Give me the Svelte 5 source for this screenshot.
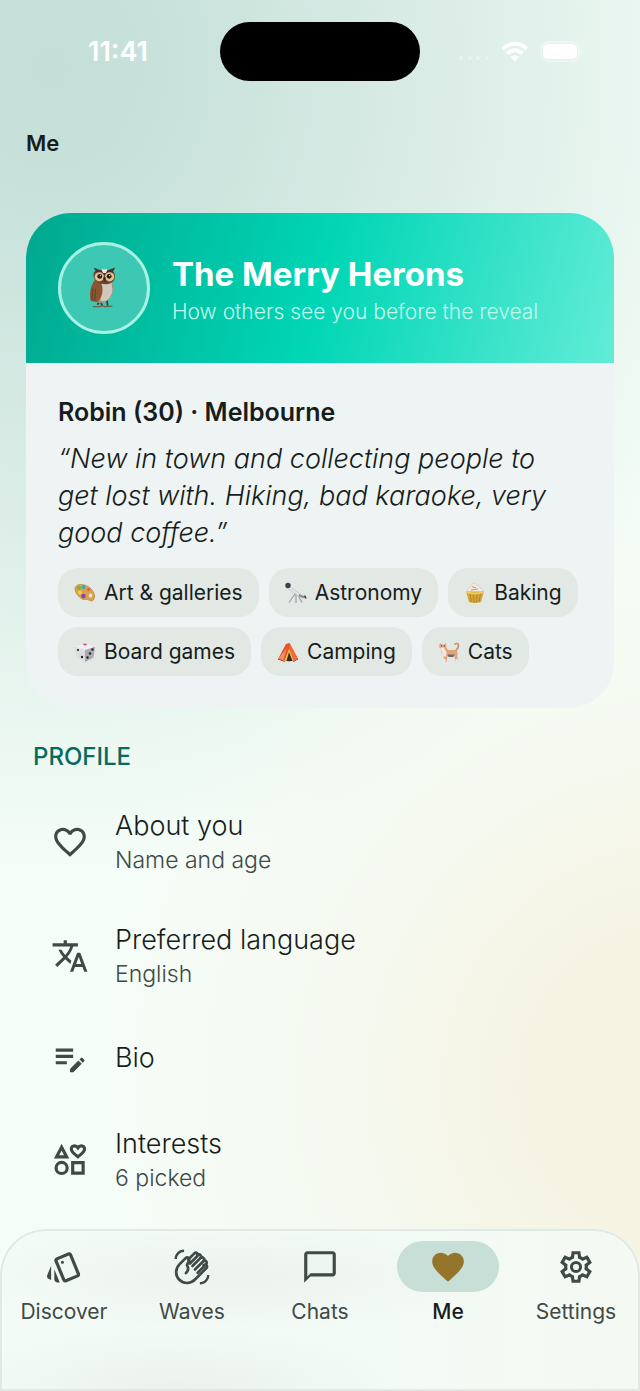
<script>
  const interests = [
    { icon: 'palette', label: 'Art & galleries' },
    { icon: 'telescope', label: 'Astronomy' },
    { icon: 'cupcake', label: 'Baking' },
    { icon: 'die', label: 'Board games' },
    { icon: 'tent', label: 'Camping' },
    { icon: 'cat', label: 'Cats' }
  ];

  const rows = [
    { icon: 'heart', title: 'About you', detail: 'Name and age' },
    { icon: 'translate', title: 'Preferred language', detail: 'English' },
    { icon: 'note', title: 'Bio', detail: '' },
    { icon: 'shapes', title: 'Interests', detail: '6 picked' }
  ];

  const tabs = [
    { icon: 'cards', label: 'Discover' },
    { icon: 'wave', label: 'Waves' },
    { icon: 'chat', label: 'Chats' },
    { icon: 'heartFill', label: 'Me', active: true },
    { icon: 'gear', label: 'Settings' }
  ];

  const paths = {
    heart:
      'M16.5 3c-1.74 0-3.41.81-4.5 2.09C10.91 3.81 9.24 3 7.5 3 4.42 3 2 5.42 2 8.5c0 3.78 3.4 6.86 8.55 11.54L12 21.35l1.45-1.32C18.6 15.36 22 12.28 22 8.5 22 5.42 19.58 3 16.5 3zm-4.4 15.55l-.1.1-.1-.1C7.14 14.24 4 11.39 4 8.5 4 6.5 5.5 5 7.5 5c1.54 0 3.04.99 3.57 2.36h1.87C13.46 5.99 14.96 5 16.5 5c2 0 3.5 1.5 3.5 3.5 0 2.89-3.14 5.74-7.9 10.05z',
    heartFill:
      'M12 21.35l-1.45-1.32C5.4 15.36 2 12.28 2 8.5 2 5.42 4.42 3 7.5 3c1.74 0 3.41.81 4.5 2.09C13.09 3.81 14.76 3 16.5 3 19.58 3 22 5.42 22 8.5c0 3.78-3.4 6.86-8.55 11.54L12 21.35z',
    translate:
      'M12.87 15.07l-2.54-2.51.03-.03c1.74-1.94 2.98-4.17 3.71-6.53H17V4h-7V2H8v2H1v1.99h11.17C11.5 7.92 10.44 9.75 9 11.35 8.07 10.32 7.3 9.19 6.69 8h-2c.73 1.63 1.73 3.17 2.98 4.56l-5.09 5.02L4 19l5-5 3.11 3.11.76-2.04zM18.5 10h-2L12 22h2l1.12-3h4.75L21 22h2l-4.5-12zm-2.62 7l1.62-4.33L19.12 17h-3.24z',
    note: 'M3 10h11v2H3v-2zm0-2h11V6H3v2zm0 8h7v-2H3v2zm15.01-3.13.71-.71c.39-.39 1.02-.39 1.41 0l.71.71c.39.39.39 1.02 0 1.41l-.71.71-2.12-2.12zm-.71.71-5.3 5.3V21h2.12l5.3-5.3-2.12-2.12z',
    cards:
      'M2.53 19.65l1.34.56v-9.03l-2.43 5.86c-.41 1.02.08 2.19 1.09 2.61zm19.5-3.7L17.07 3.98c-.31-.75-1.04-1.21-1.81-1.23-.26 0-.53.04-.79.15L7.1 5.95c-.75.31-1.21 1.03-1.23 1.8-.01.27.04.54.15.8l4.96 11.97c.31.76 1.05 1.22 1.83 1.23.26 0 .52-.05.77-.15l7.36-3.05c1.02-.42 1.51-1.59 1.09-2.6zm-9.2 3.8L7.87 7.79l7.35-3.04h.01l4.95 11.95-7.35 3.05zM11 8a1 1 0 1 0 0 2 1 1 0 0 0 0-2zM5.88 19.75c0 1.1.9 2 2 2h1.45l-3.45-8.34v6.34z',
    chat: 'M20 2H4c-1.1 0-2 .9-2 2v18l4-4h14c1.1 0 2-.9 2-2V4c0-1.1-.9-2-2-2zm0 14H6l-2 2V4h16v12z'
  };
</script>

{#snippet glyph(name)}
  {#if name === 'shapes'}
    <svg class="glyph" viewBox="0 0 24 24" aria-hidden="true">
      <g fill="none" stroke="currentColor" stroke-width="2">
        <path d="M6.700 3.900L3.500 10h6.400z" />
        <path d="M17 10c-2.600-1.900-4.200-3.200-4.200-4.900 0-2.300 2.900-2.700 4.200-.8 1.300-1.900 4.200-1.500 4.200.8 0 1.700-1.600 3-4.200 4.900z" />
        <circle cx="6.700" cy="17" r="3.500" />
        <path d="M13.700 13.700h6.600v6.600h-6.600z" />
      </g>
    </svg>
  {:else if name === 'gear'}
    <svg class="glyph" viewBox="0 -960 960 960" aria-hidden="true">
      <path
        fill="currentColor"
        d="m370-80-16-128q-13-5-24.500-12T307-235l-119 50L78-375l103-78q-1-7-1-13.500v-27q0-6.500 1-13.500L78-585l110-190 119 50q11-8 23-15t24-12l16-128h220l16 128q13 5 24.500 12t22.500 15l119-50 110 190-103 78q1 7 1 13.500v27q0 6.500-2 13.500l103 78-110 190-118-50q-11 8-23 15t-24 12L590-80H370Zm70-80h79l14-106q31-8 57.500-23.500T639-327l99 41 39-68-86-65q5-14 7-29.500t2-31.500q0-16-2-31.500t-7-29.500l86-65-39-68-99 42q-22-23-48.500-38.500T533-694l-13-106h-79l-14 106q-31 8-57.500 23.500T321-633l-99-41-39 68 86 64q-5 15-7 30t-2 32q0 16 2 31t7 30l-86 65 39 68 99-42q22 23 48.500 38.500T427-266l13 106Z"
      />
      <circle cx="480" cy="-480" r="116" fill="none" stroke="currentColor" stroke-width="76" />
    </svg>
  {:else if name === 'wave'}
    <svg class="glyph" viewBox="0 0 24 24" aria-hidden="true">
      <g fill="none" stroke="currentColor" stroke-width="1.700" stroke-linecap="round" stroke-linejoin="round">
        <path d="M8.200 15.800c1.600-1.500 1.600-3.400.6-5L10 8.300c.8-1.300-.6-3-2-1.900L4.200 10.200c-2.900 2.900-2.900 7.200-.2 9.900s7 2.700 9.900-.2l7.100-7.100c1.200-1.300-.3-3-1.700-1.900" />
        <path d="M9.600 7.300l3.900-3.900c1.300-1.100 2.900.5 1.800 1.800l-4.600 4.600" />
        <path d="M15.300 4.600c1.400-1.300 3.200.4 2 1.800l-5 5" />
        <path d="M17.500 6.300c1.400-.9 2.900.6 1.800 1.900l-5.400 5.400" />
        <path d="M19.400 8.200c1.400-.6 2.500.9 1.400 2.200l-5.200 5.200" />
      </g>
      <path d="M1 7c0-3.310 2.690-6 6-6v1.500C4.520 2.500 2.500 4.520 2.500 7zM23 17c0 3.310-2.690 6-6 6v-1.500c2.480 0 4.500-2.020 4.500-4.500z" fill="currentColor" />
    </svg>
  {:else}
    <svg class="glyph" viewBox="0 0 24 24" aria-hidden="true"><path fill="currentColor" d={paths[name]} /></svg>
  {/if}
{/snippet}

{#snippet emoji(name)}
  <svg class="emoji" viewBox="0 0 22 22" aria-hidden="true">
    {#if name === 'palette'}
      <path d="M1 7C1 2 8 1 14 4.500s8 10 5.500 13.500c-2 2.500-4.500-.5-7-.5-3 0-4 .5-6.500-2C3 13 1 10 1 7z" fill="#dba24b" stroke="#b57b2e" stroke-width=".6" />
      <circle cx="5" cy="6" r="2.100" fill="#77b837" />
      <circle cx="9.500" cy="5" r="1.900" fill="#35a6c4" />
      <circle cx="6" cy="10.500" r="2" fill="#f2d13a" />
      <circle cx="9.500" cy="14" r="2.200" fill="#8a3fb3" />
      <circle cx="14.500" cy="7.500" r="1.500" fill="#e2603d" />
      <ellipse cx="16.500" cy="13.500" rx="1.700" ry="2" fill="#e8efec" />
    {:else if name === 'telescope'}
      <path d="M10.500 11.500L4 20.500M11 11.500v9.500M12 11.500l5 9" stroke="#9ba2a3" stroke-width="1.200" fill="none" />
      <path d="M3.500 3.500l12 9-1.300 2.200L1.800 6z" fill="#e1e6e6" stroke="#a9b0b2" stroke-width=".5" />
      <circle cx="3" cy="3.500" r="2.700" fill="#35434f" />
      <path d="M14 12l6 2.500-.6 2-5.400-2z" fill="#878e92" />
      <path d="M19.500 13.500l1.500 3" stroke="#3b454c" stroke-width="1.500" />
    {:else if name === 'cupcake'}
      <path d="M4 10C2 7 6 6 6.500 4.500 8 1 12 0 12.500 3c3-.5 3 2 3.500 3 3 .5 3.500 3 2 4.500z" fill="#f1e8df" stroke="#d4c2b2" stroke-width=".6" />
      <path d="M8 4.500l4 1.500M7 8l7-1" stroke="#c58a6d" stroke-width=".9" />
      <path d="M2 9.500h18l-3 10.500q-6 2-12 0z" fill="#d6a538" />
      <path d="M2 10q9 3 18 0" stroke="#edcc6a" stroke-width="1.800" fill="none" />
      <path d="M6 12l1.300 8M9.500 12.500l.5 8M13 12.500l-.5 8M16.500 12l-1.500 8" stroke="#ab7b20" stroke-width=".8" />
    {:else if name === 'die'}
      <path d="M1 5.500L11 2l10 3.500-1.500 11L11 21l-8.500-5z" fill="#dcdde0" />
      <path d="M11 9l10-3.500-1.500 11L11 21z" fill="#a9abb0" />
      <path d="M1 5.500L11 2l10 3.500L11 9z" fill="#f0f0f2" />
      <ellipse cx="11" cy="3.500" rx="2" ry="1" fill="#e65065" />
      <g fill="#25272b">
        <circle cx="4" cy="9" r="1.100" /><circle cx="8" cy="16" r="1.200" />
        <circle cx="13.500" cy="16.500" r="1.200" /><circle cx="16" cy="12.500" r="1.200" /><circle cx="18.500" cy="8.500" r="1.200" />
      </g>
    {:else if name === 'tent'}
      <path d="M9 3l3.500-1L21 18l-9 2.500L1 18z" fill="#e5532d" />
      <path d="M12.500 2L21 18l-9 2.500z" fill="#f26a37" />
      <path d="M10 7L1 18l5 1.500z" fill="#f58d66" />
      <path d="M12 8l-4.500 11.500 9 0z" fill="#f1c54a" />
      <path d="M12 11l-2.500 9h6z" fill="#372a23" />
      <path d="M1 18l7 2.500M21 18l-5 2.500" stroke="#aa3d20" />
    {:else}
      <path d="M17.500 10c1-2 3-2 3-5.500 0-2-2-2.500-3.500-1.500" fill="none" stroke="#cf8e63" stroke-width="1.700" stroke-linecap="round" />
      <path d="M2 2l2 1.500h2.500L8 2l.5 5 2 2h7q2 0 2 3v8h-2.200l-.8-5h-7l-1 6H6.300l-.8-7Q3 12 3 8L1 6z" fill="#e0a47b" />
      <path d="M2.500 6.500h3.500l2.500 5-.5 4H6Q3.500 11 2.500 6.500z" fill="#f4e9df" />
      <path d="M9.500 13.500h7l-1 2.500h-5z" fill="#70696a" />
      <circle cx="3.500" cy="4.800" r=".6" fill="#51372a" /><circle cx="6.300" cy="4.800" r=".6" fill="#51372a" />
      <path d="M6.700 18v3M18.500 18v3" stroke="#f3e8df" stroke-width="1.600" />
    {/if}
  </svg>
{/snippet}

<div class="screen">
  <header class="status">
    <span class="time">11:41</span>
    <span class="island"></span>
    <span class="signals">
      <svg width="124" height="24" viewBox="0 0 124 24" aria-hidden="true">
        <g fill="#fff" opacity=".35">
          <circle cx="2" cy="18" r="2" /><circle cx="11" cy="18" r="2" /><circle cx="19" cy="18" r="2" /><circle cx="28" cy="18" r="2" />
        </g>
        <g fill="none" stroke="#fff" stroke-width="4">
          <path d="M43.500 8.800q12.500-10 24.500 0" />
          <path d="M48 13.500q7.700-6.500 15.500 0" />
        </g>
        <path d="M51.500 17q4.200-3.500 8.500 0l-4.200 4.500z" fill="#fff" />
        <rect x="82" y="2" width="38" height="19" rx="6.500" fill="none" stroke="#fff" stroke-width="1.500" opacity=".45" />
        <rect x="84" y="4" width="34" height="15" rx="4.500" fill="#fff" />
        <path d="M122 8q3 3.500 0 7z" fill="#fff" opacity=".5" />
      </svg>
    </span>
  </header>

  <main>
    <h1>Me</h1>

    <section class="card">
      <div class="hero">
        <span class="avatar">
          <svg viewBox="0 0 30 46" aria-hidden="true">
            <path d="M8 41l3-5 2 6M18 36l1 6" stroke="#4d3a31" stroke-width="2" fill="none" />
            <path d="M3 43h8l2-1 3 1 8-.500" stroke="#725f50" stroke-width="1.300" fill="none" />
            <path d="M6 13C1 20 0 30 1 37l6 1c8 4 16-4 17-10 2-5 0-10-1-15z" fill="#a29083" />
            <path d="M11 16c-2 6-1 16 1 21 7 2 12-6 12-12l-1-9z" fill="#d3c6bd" />
            <path d="M6 14C0 20-1 31 1 37l7 1c6-5 7-16 3-22z" fill="#8b562f" />
            <path d="M3 23l-1 13M6 24l-1 13" stroke="#623a22" />
            <path d="M4 7C5 2 25 2 26 7c3 8-3 12-9 12S2 16 4 7z" fill="#6a432f" />
            <path d="M4 1l7 3h8l8-3-3 6-9 2-8-2z" fill="#49342e" />
            <path d="M12 3h7l-2 4h-3z" fill="#f1eae6" />
            <circle cx="10" cy="11" r="5" fill="#e7bf8a" /><circle cx="21" cy="11" r="5" fill="#e7bf8a" />
            <circle cx="10.500" cy="10.500" r="2.600" fill="#241713" /><circle cx="20.500" cy="10.500" r="2.600" fill="#241713" />
            <circle cx="11" cy="9.800" r=".7" fill="#fff" /><circle cx="21" cy="9.800" r=".7" fill="#fff" />
            <path d="M14 12q2-2 3 0l-1.500 5z" fill="#332b2b" />
          </svg>
        </span>
        <div>
          <h2>The Merry Herons</h2>
          <p>How others see you before the reveal</p>
        </div>
      </div>
      <div class="body">
        <h3>Robin (30) · Melbourne</h3>
        <blockquote>“New in town and collecting people to<br />get lost with. Hiking, bad karaoke, very<br />good coffee.”</blockquote>
        <ul class="chips">
          {#each interests as item}
            <li>{@render emoji(item.icon)}{item.label}</li>
          {/each}
        </ul>
      </div>
    </section>

    <section class="profile">
      <h4>PROFILE</h4>
      {#each rows as row}
        <button type="button" class="row">
          {@render glyph(row.icon)}
          <span class="copy">
            <span class="title">{row.title}</span>
            {#if row.detail}<span class="detail">{row.detail}</span>{/if}
          </span>
        </button>
      {/each}
    </section>
  </main>

  <nav>
    {#each tabs as tab}
      <button type="button" class="tab" class:active={tab.active} aria-current={tab.active ? 'page' : undefined}>
        <span class="pill">{@render glyph(tab.icon)}</span>
        <span>{tab.label}</span>
      </button>
    {/each}
  </nav>
</div>

<style>
  .screen {
    display: flex;
    flex-direction: column;
    min-height: 100vh;
    overflow: hidden;
    color: #171d1b;
    font-family: Inter, 'Liberation Sans', sans-serif;
    background:
      radial-gradient(ellipse 90% 42% at 106% 78%, #f5f3e0 0%, #f5f4e3 25%, #f5f7eb99 60%, #f5fbf200 100%),
      radial-gradient(ellipse 115% 58% at 8% 5%, #c3dfd8 0%, #cae3dc 20%, #dcede7 55%, #f4fcf800 100%),
      #f5fdf8;
  }
  h1, h2, h3, h4, p, blockquote, ul { margin: 0; padding: 0; }
  button { border: 0; background: none; padding: 0; color: inherit; font: inherit; text-align: left; }
  .glyph { display: block; width: 38px; height: 38px; flex: none; }

  .status {
    display: grid;
    grid-template-columns: 1fr 200px 1fr;
    align-items: center;
    padding-top: 22px;
    color: #fff;
  }
  .time { justify-self: center; padding-left: 16px; font-size: 27px; font-weight: 600; }
  .island { height: 59px; border-radius: 30px; background: #000; }
  .signals { justify-self: center; padding-right: 18px; }
  .signals svg { display: block; }

  main { flex: 1; padding: 0 26px; }
  h1 { padding: 46px 0 54px; font-size: 22px; line-height: 32px; font-weight: 600; }

  .card { border-radius: 45px; overflow: hidden; background: #eef4f4; }
  .hero {
    display: flex;
    align-items: center;
    gap: 22px;
    box-sizing: border-box;
    min-height: 150px;
    padding: 6px 32px 0;
    color: #fff;
    background: linear-gradient(105deg, #00a88f 0%, #00d6b5 50%, #62ecd7 100%);
  }
  .avatar {
    display: grid;
    place-items: center;
    box-sizing: border-box;
    flex: none;
    width: 92px;
    height: 92px;
    margin-bottom: 6px;
    border: 3px solid #a9f1e3;
    border-radius: 50%;
    background: #3cc8b3;
  }
  .avatar svg { width: 28px; height: 44px; }
  h2 { font-size: 33px; line-height: 42px; font-weight: 700; }
  .hero p { font-size: 21px; line-height: 34px; font-weight: 300; color: #c4f8ec; }

  .body { padding: 32px; }
  h3 { font-size: 25px; line-height: 34px; font-weight: 600; }
  blockquote { margin: 11px 0 17px; font-size: 27px; line-height: 37px; font-weight: 300; font-style: italic; white-space: nowrap; }
  .chips { display: flex; flex-wrap: wrap; gap: 10px; list-style: none; }
  .chips li {
    display: flex;
    align-items: center;
    gap: 8px;
    height: 49px;
    padding: 0 16px;
    border-radius: 20px;
    background: #e2e8e4;
    font-size: 21px;
  }
  .emoji { display: block; width: 22px; height: 22px; flex: none; }

  h4 { padding: 31px 7px 10px; font-size: 24px; line-height: 36px; font-weight: 500; color: #056b5c; }
  .row {
    display: flex;
    align-items: center;
    gap: 26px;
    width: 100%;
    min-height: 90px;
    padding: 23px 25px;
    color: #3f4946;
  }
  .copy { display: grid; }
  .title { font-size: 27px; line-height: 36px; font-weight: 300; color: #171d1b; }
  .detail { font-size: 23px; line-height: 32px; font-weight: 300; }

  nav {
    display: grid;
    grid-template-columns: repeat(5, 1fr);
    box-sizing: border-box;
    min-height: 162px;
    margin-top: 10px;
    padding-top: 12px;
    border-radius: 46px 46px 0 0;
    box-shadow: inset 0 0 0 2px #e1e9e4;
    background:
      radial-gradient(ellipse 40% 34% at 36% 30%, #ecf2ed 0%, #ecf2ed00 100%),
      radial-gradient(ellipse 34% 40% at 28% 100%, #eaf1ed 0%, #eaf1ed00 100%),
      linear-gradient(90deg, #f3fbf7 0%, #f3fbf6 60%, #f4f9f2 100%);
  }
  .tab { display: flex; flex-direction: column; align-items: center; align-self: start; gap: 6px; color: #3f4946; font-size: 21px; line-height: 28px; }
  .pill { display: grid; place-items: center; width: 102px; height: 51px; border-radius: 26px; }
  .active { color: #171d1b; font-weight: 500; }
  .active .pill { background: #c8dfd8; color: #95742c; }
</style>
